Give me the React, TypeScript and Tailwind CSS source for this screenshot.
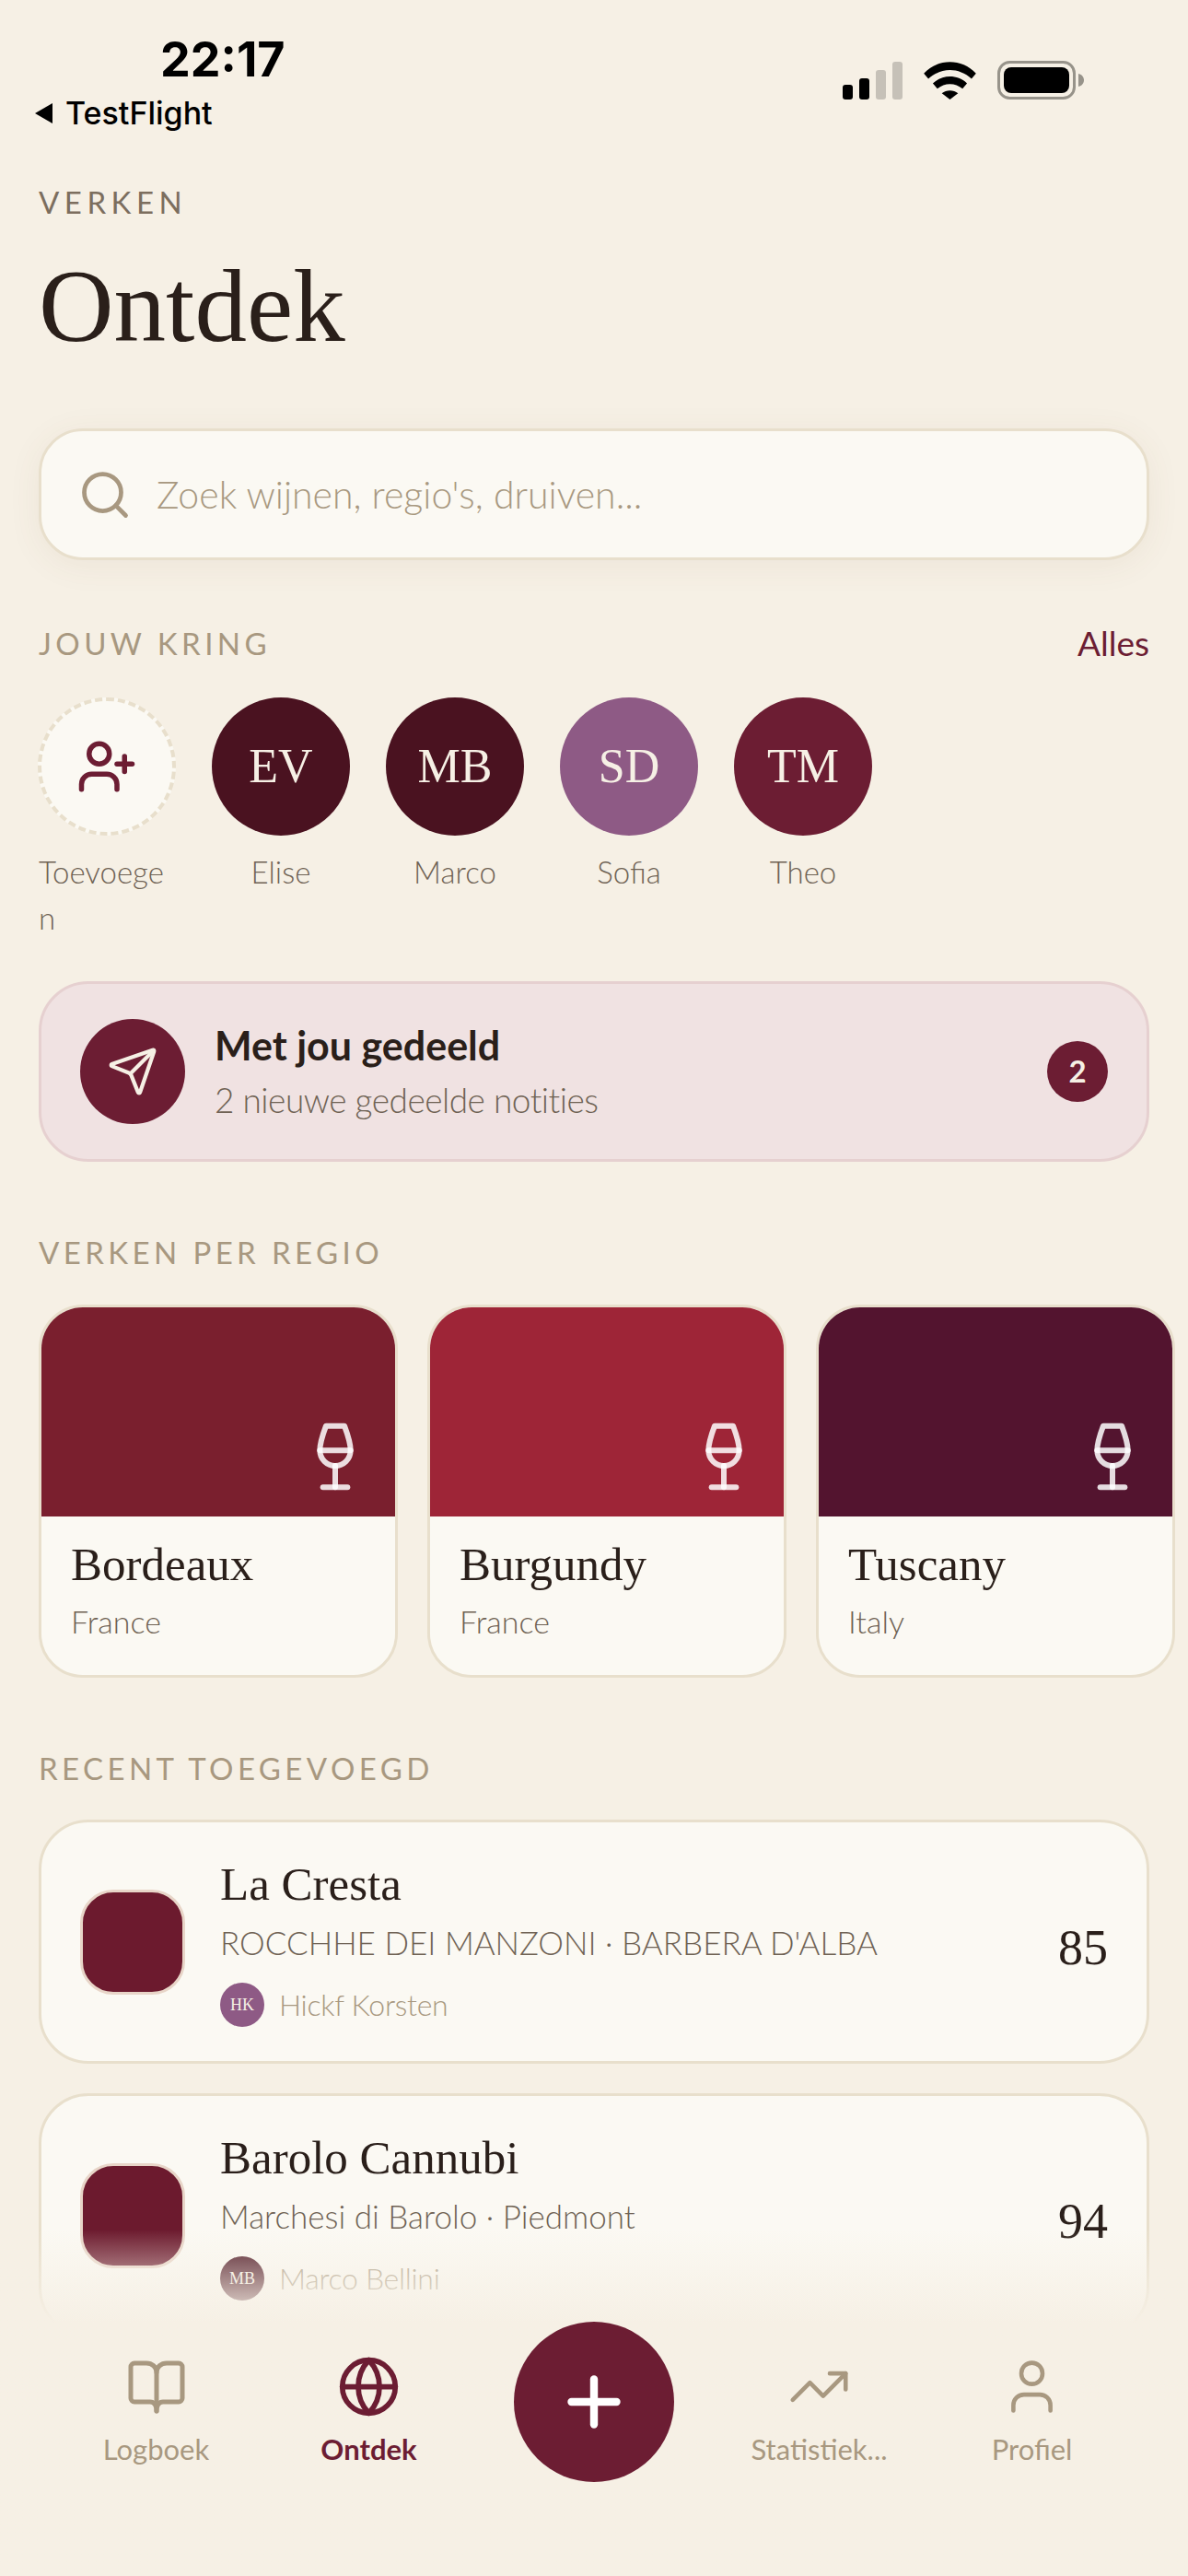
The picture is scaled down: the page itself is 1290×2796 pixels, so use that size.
import React from 'react';
import { Search, UserPlus, Send, Wine, Globe, User, TrendingUp, Plus } from 'lucide-react';

const sans = "font-['Lato','Liberation_Sans',sans-serif]";
const serif = "font-['Liberation_Serif',serif]";

const circle = [
  { initials: 'EV', name: 'Elise', color: 'bg-[#4a1220]' },
  { initials: 'MB', name: 'Marco', color: 'bg-[#4a1220]' },
  { initials: 'SD', name: 'Sofia', color: 'bg-[#8e5a85]' },
  { initials: 'TM', name: 'Theo', color: 'bg-[#6c1d33]' },
];

const regions = [
  { name: 'Bordeaux', country: 'France', color: 'bg-[#7a1f2e]' },
  { name: 'Burgundy', country: 'France', color: 'bg-[#9e2537]' },
  { name: 'Tuscany', country: 'Italy', color: 'bg-[#53142f]' },
];

const wines = [
  { title: 'La Cresta', sub: "ROCCHHE DEI MANZONI · BARBERA D'ALBA", initials: 'HK', author: 'Hickf Korsten', score: '85', avatar: 'bg-[#8e5a85]' },
  { title: 'Barolo Cannubi', sub: 'Marchesi di Barolo · Piedmont', initials: 'MB', author: 'Marco Bellini', score: '94', avatar: 'bg-[#4a1220]' },
];

function SectionLabel({ children }: { children: React.ReactNode }) {
  return <h3 className="text-[33px] leading-[40px] font-normal tracking-[4.4px] text-[#a89880]">{children}</h3>;
}

function TabItem({ label, active, icon }: { label: string; active?: boolean; icon: React.ReactNode }) {
  return (
    <div className={`flex w-[231px] flex-col items-center gap-[13px] ${active ? 'text-[#6c1d33]' : 'text-[#a89880]'}`}>
      <div className="flex h-[69px] items-center justify-center">{icon}</div>
      <span className={`text-[31px] leading-[40px] ${active ? 'font-bold' : 'font-normal'}`}>{label}</span>
    </div>
  );
}

function BookIcon() {
  return (
    <svg width="62" height="58" viewBox="0 0 62 58" fill="none" stroke="currentColor" strokeWidth="5" strokeLinecap="round" strokeLinejoin="round">
      <path d="M31 13c0-6-5-10-11-10H7a4 4 0 0 0-4 4v34a4 4 0 0 0 4 4h17c4 0 7 3 7 10 0-7 3-10 7-10h17a4 4 0 0 0 4-4V7a4 4 0 0 0-4-4H42c-6 0-11 4-11 10z" />
      <path d="M31 13v42" />
    </svg>
  );
}

export default function App() {
  return (
    <div className={`relative h-[2796px] w-[1290px] overflow-hidden bg-[#f6f0e5] ${sans}`}>
      {/* Status bar */}
      <div className="flex h-[160px] justify-between pl-[37px] pr-[113px]">
        <div className="pt-[34px] font-['Inter',sans-serif]">
          <div className="pl-[137px] text-[52px] leading-[62px] font-bold text-black">22:17</div>
          <div className="mt-[7px] flex items-center gap-[14px] text-[34px] leading-[40px] font-medium text-black">
            <svg width="20" height="24" viewBox="0 0 20 24"><path d="M20 1v22L1 12z" fill="#000" /></svg>
            TestFlight
          </div>
        </div>
        <div className="flex items-center gap-[23px] pt-[14px]">
          <svg width="65" height="41" viewBox="0 0 65 41">
            <rect x="0" y="25" width="11" height="16" rx="3" fill="#000" />
            <rect x="18" y="18" width="11" height="23" rx="3" fill="#000" />
            <rect x="36" y="9" width="11" height="32" rx="3" fill="#c6c1b8" />
            <rect x="54" y="0" width="11" height="41" rx="3" fill="#c6c1b8" />
          </svg>
          <svg width="57" height="41" viewBox="0 0 58 42">
            <path d="M0 13C16-4 42-4 58 13l-5 6C39 6 19 6 5 19z" fill="#000" />
            <path d="M10 24c11-10 27-10 38 0l-5 6c-8-7-20-7-28 0z" fill="#000" />
            <path d="M20 35c5-4 13-4 18 0l-9 7z" fill="#000" />
          </svg>
          <svg width="94" height="42" viewBox="0 0 94 42">
            <rect x="1.5" y="1.5" width="82" height="39" rx="12" fill="none" stroke="#97938a" strokeWidth="3" />
            <rect x="7" y="7" width="71" height="28" rx="8" fill="#000" />
            <path d="M88 14c4 1 6 4 6 7s-2 6-6 7z" fill="#97938a" />
          </svg>
        </div>
      </div>

      <main className="flex flex-col px-[42px]">
        <header className="pt-[39px]">
          <p className="text-[33px] leading-[40px] tracking-[5.5px] text-[#7c6e5e]">VERKEN</p>
          <h1 className={`mt-[33px] text-[113px] leading-[120px] font-normal text-[#2a1f1a] ${serif}`}>Ontdek</h1>
        </header>

        {/* Search */}
        <div className="mt-[73px] flex h-[143px] items-center gap-[26px] rounded-[48px] border-[3px] border-[#e8dfcc] bg-[#fbf9f3] px-[39px] shadow-[0_6px_36px_rgba(120,90,50,0.07)]">
          <Search size={60} strokeWidth={1.9} className="text-[#a89880]" />
          <span className="text-[41px] font-light text-[#a89880]">Zoek wijnen, regio's, druiven...</span>
        </div>

        {/* Jouw kring */}
        <div className="mt-[68px] flex items-center justify-between">
          <SectionLabel>JOUW KRING</SectionLabel>
          <span className="text-[37px] leading-[44px] font-normal text-[#6c1d33]">Alles</span>
        </div>
        <div className="mt-[37px] -ml-[1px] flex gap-[39px]">
          <div className="w-[150px]">
            <div className="flex size-[150px] items-center justify-center rounded-full border-[4px] border-dashed border-[#e8dfcc] bg-[#fbf9f3]">
              <UserPlus size={66} strokeWidth={2} className="text-[#6c1d33]" />
            </div>
            <p className="mt-[14px] pl-[1px] text-[33px] leading-[50px] font-light break-all text-[#6f6254]">Toevoegen</p>
          </div>
          {circle.map((c) => (
            <div key={c.name} className="w-[150px]">
              <div className={`flex size-[150px] items-center justify-center rounded-full text-[52px] text-[#f6f0e5] ${serif} ${c.color}`}>{c.initials}</div>
              <p className="mt-[14px] text-center text-[33px] leading-[50px] font-light text-[#6f6254]">{c.name}</p>
            </div>
          ))}
        </div>

        {/* Shared */}
        <div className="mt-[44px] flex h-[196px] items-center rounded-[54px] border-[3px] border-[#e6d0d0] bg-[#f0e2e2] px-[42px]">
          <div className="flex size-[114px] items-center justify-center rounded-full bg-[#6c1d33]">
            <Send size={56} strokeWidth={1.8} className="text-[#f6f0e5]" />
          </div>
          <div className="ml-[32px] flex-1">
            <p className="text-[43px] leading-[54px] font-bold text-[#2a1f1a]">Met jou gedeeld</p>
            <p className="mt-[8px] text-[37px] leading-[48px] font-light tracking-[-0.5px] text-[#6f6254]">2 nieuwe gedeelde notities</p>
          </div>
          <div className="flex size-[66px] items-center justify-center rounded-full bg-[#6c1d33] text-[33px] font-bold text-[#f6f0e5]">2</div>
        </div>

        {/* Regions */}
        <div className="mt-[78px]">
          <SectionLabel>VERKEN PER REGIO</SectionLabel>
        </div>
        <div className="mt-[37px] flex w-[1300px] gap-[32px]">
          {regions.map((r) => (
            <div key={r.name} className="h-[405px] w-[390px] shrink-0 overflow-hidden rounded-[48px] border-[3px] border-[#e8dfcc] bg-[#fbf9f3]">
              <div className={`flex h-[227px] items-end justify-end pr-[25px] pb-[25px] ${r.color}`}>
                <Wine size={80} strokeWidth={1.8} strokeOpacity={0.85} className="text-white" />
              </div>
              <div className="px-[32px] pt-[22px]">
                <p className={`text-[51px] leading-[60px] text-[#2a1f1a] ${serif}`}>{r.name}</p>
                <p className="mt-[10px] text-[34px] leading-[44px] font-light text-[#6f6254]">{r.country}</p>
              </div>
            </div>
          ))}
        </div>

        {/* Recent */}
        <div className="mt-[78px]">
          <SectionLabel>RECENT TOEGEVOEGD</SectionLabel>
        </div>
        <div className="mt-[36px] flex flex-col gap-[32px]">
          {wines.map((w) => (
            <div key={w.title} className="flex h-[265px] items-center rounded-[54px] border-[3px] border-[#e8dfcc] bg-[#fbf9f3] px-[42px]">
              <div className="size-[114px] shrink-0 rounded-[36px] border-[3px] border-[#e8d5c8] bg-[#6c1a2e]" />
              <div className="ml-[38px] flex-1">
                <p className={`text-[51px] leading-[60px] text-[#2a1f1a] ${serif}`}>{w.title}</p>
                <p className="mt-[10px] text-[35px] leading-[46px] font-light text-[#6f6254]">{w.sub}</p>
                <div className="mt-[21px] flex items-center gap-[16px]">
                  <div className={`flex size-[48px] items-center justify-center rounded-full text-[18px] text-[#f6f0e5] ${serif} ${w.avatar}`}>{w.initials}</div>
                  <span className="text-[32px] font-light tracking-[-0.3px] text-[#a89880]">{w.author}</span>
                </div>
              </div>
              <span className={`pt-[14px] text-[54px] text-[#2a1f1a] ${serif}`}>{w.score}</span>
            </div>
          ))}
        </div>
      </main>

      {/* Tab bar */}
      <div className="absolute inset-x-0 bottom-0 h-[376px] bg-gradient-to-b from-[#f6f0e5]/0 from-0% via-[#f6f0e5] via-27% to-[#f6f0e5]">
        <div className="flex items-start justify-between px-[54px] pt-[136px]">
          <div className="flex">
            <TabItem label="Logboek" icon={<BookIcon />} />
            <TabItem label="Ontdek" active icon={<Globe size={69} strokeWidth={2} />} />
          </div>
          <div className="-mt-[36px] flex size-[174px] items-center justify-center rounded-full bg-[#6c1d33] text-white">
            <Plus size={84} strokeWidth={2.4} />
          </div>
          <div className="flex">
            <TabItem label="Statistiek..." icon={<TrendingUp size={69} strokeWidth={1.6} />} />
            <TabItem label="Profiel" icon={<User size={69} strokeWidth={1.6} />} />
          </div>
        </div>
      </div>
    </div>
  );
}
